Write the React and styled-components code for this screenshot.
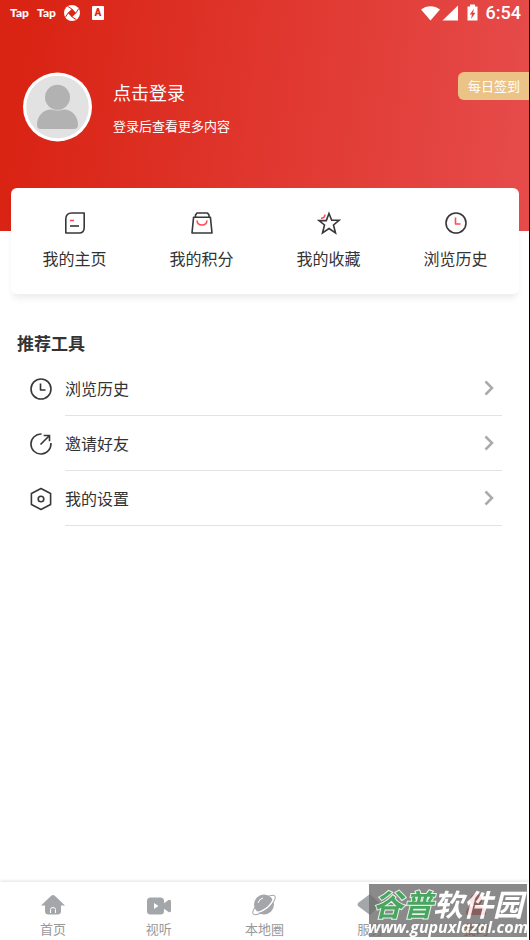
import React from 'react';
import styled, { createGlobalStyle } from 'styled-components';

const GlobalStyle = createGlobalStyle`
  * {
    box-sizing: border-box;
  }

  body {
    margin: 0;
    background: #fff;
    color: #333;
    font-family: 'Noto Sans CJK SC', sans-serif;
  }

  button {
    font-family: inherit;
    color: inherit;
    background: none;
    border: none;
    padding: 0;
    cursor: pointer;
  }

  a {
    color: inherit;
    text-decoration: none;
  }

  svg {
    display: block;
    flex: none;
  }
`;

const Page = styled.div`
  display: flex;
  flex-direction: column;
  min-height: 100vh;
  border-right: 1px solid #000;
`;

// Header
const Header = styled.header`
  padding-bottom: 89px;
  color: #fff;
  background: linear-gradient(98deg, #d92313 4%, #e64b4a 97%);
`;

const StatusBar = styled.div`
  display: flex;
  align-items: center;
  justify-content: space-between;
  height: 26px;
  padding: 0 8px 0 10px;
`;

const StatusGroup = styled.div`
  display: flex;
  align-items: center;
  gap: ${({ $gap }) => $gap}px;
`;

const TapMark = styled.span`
  font: 900 12px/16px Lato, sans-serif;
`;

const Clock = styled.time`
  font: 500 18px/26px Roboto, sans-serif;
`;

const Profile = styled.div`
  display: flex;
  align-items: flex-start;
  padding: 46px 0 0 23px;
`;

const ProfileText = styled.div`
  flex: 1;
  padding: 7px 0 0 21px;
`;

const LoginButton = styled.button`
  display: block;
  font-size: 18px;
  line-height: 26px;
`;

const Hint = styled.p`
  margin: 11px 0 0;
  font-size: 13px;
  line-height: 20px;
`;

const SignInButton = styled.button`
  height: 28px;
  padding: 0 9px 0 10px;
  border-radius: 6px 0 0 6px;
  background: #ecc386;
  color: #fff;
  font-size: 13px;
  line-height: 28px;
`;

// Shortcut card
const Card = styled.nav`
  position: relative;
  display: flex;
  margin: -43px 10px 0 11px;
  padding: 23px 0 22px;
  border-radius: 6px;
  background: #fff;
  box-shadow: 0 6px 7px -2px rgba(0, 0, 0, 0.08);
`;

const Shortcut = styled.a`
  flex: 1;
  display: flex;
  flex-direction: column;
  align-items: center;
  gap: 10px;
  font-size: 16px;
  line-height: 27px;
`;

// Tool list
const Tools = styled.main`
  flex: 1;
  padding: 36px 27px 0 17px;
`;

const Title = styled.h2`
  margin: 0 0 5px;
  font-size: 17px;
  line-height: 26px;
`;

const ToolList = styled.ul`
  margin: 0;
  padding: 0 0 0 12px;
  list-style: none;
`;

const ToolLink = styled.a`
  display: flex;
  align-items: center;
  gap: 12px;
`;

const ToolBody = styled.span`
  flex: 1;
  display: flex;
  align-items: center;
  justify-content: space-between;
  height: 55px;
  padding-right: 8px;
  border-bottom: 1px solid #e3e3e3;
  font-size: 16px;
`;

// Bottom tabs
const TabBar = styled.nav`
  display: flex;
  height: 58px;
  padding-top: 11px;
  background: #fff;
  box-shadow: 0 -1px 3px rgba(0, 0, 0, 0.12);
`;

const Tab = styled.a`
  flex: 1;
  display: flex;
  flex-direction: column;
  align-items: center;
  gap: 2px;
  color: ${({ $active }) => ($active ? '#e0302a' : '#999')};
  font-size: 13px;
  line-height: 20px;
`;

const Watermark = styled.div`
  position: fixed;
  right: 3px;
  bottom: 3px;
  width: 158px;
  height: 53px;
  background: rgba(107, 107, 107, 0.9);
  opacity: 0.88;
  color: #fff;
  white-space: nowrap;
  display: flex;
  flex-direction: column;
  align-items: center;
`;

const WatermarkName = styled.div`
  font-size: 30px;
  font-weight: 700;
  font-style: italic;
  line-height: 34px;
  height: 33px;
  padding-top: 2px;
`;

const Green = styled.span`
  color: #2f9a4b;
  -webkit-text-stroke: 2px #e6f0e6;
  paint-order: stroke fill;
`;

const WatermarkUrl = styled.div`
  font: italic 700 16px/20px 'Open Sans', sans-serif;
`;

const LineIcon = ({ children }) => (
  <svg width="24" height="24" viewBox="0 0 24 24" fill="none" stroke="#383838" strokeWidth="1.6" strokeLinejoin="round" aria-hidden="true">
    {children}
  </svg>
);

const HomePageIcon = () => (
  <LineIcon>
    <path d="M9 2H21.2V16.5C21.2 20 19 22 16 22H2.8V8C2.8 4 5 2 9 2Z" />
    <path d="M7 15H16" />
    <path d="M7 9.5H11" stroke="#ff4d55" />
  </LineIcon>
);

const PointsIcon = () => (
  <LineIcon>
    <path d="M3.6 6.2H20.4L22 22H2Z" />
    <path d="M5.5 6V4L7 2H17.5L19 4V6" />
    <path d="M7 9.5C7.5 15.5 16.5 15.5 17 9.5" stroke="#ff4d55" />
  </LineIcon>
);

const StarIcon = () => (
  <LineIcon>
    <path d="M12 2.5L14.7 9.3H22L16.5 14L18.5 22L12 17.5L5.5 22L7.5 14L2 9.6H9.3Z" strokeLinejoin="miter" />
    <path d="M4 7.3C6.5 7.3 7.8 6.5 8 3.5" stroke="#ff4d55" />
  </LineIcon>
);

const ClockIcon = ({ hand = 'currentColor' }) => (
  <LineIcon>
    <circle cx="12" cy="12" r="10" />
    <path d="M11.5 6.5V13H16.5" stroke={hand} />
  </LineIcon>
);

const InviteIcon = () => (
  <LineIcon>
    <path d="M12.5 2A10 10 0 1 0 21.9 11" />
    <path d="M11.5 12.5L20 4M14.7 3.5H20.5V9.3" strokeLinejoin="miter" />
  </LineIcon>
);

const SettingsIcon = () => (
  <LineIcon>
    <path d="M12 1.5L21.6 6.5V17.5L12 22.5L2.4 17.5V6.5Z" />
    <circle cx="12" cy="12" r="2.8" />
  </LineIcon>
);

const Chevron = () => (
  <svg width="10" height="16" viewBox="0 0 10 16" fill="none" stroke="#aaa" strokeWidth="2.5" aria-hidden="true">
    <path d="M1.5 1.5L8 8L1.5 14.5" />
  </svg>
);

const Avatar = () => (
  <svg width="69" height="70" viewBox="0 0 69 70" role="img" aria-label="头像">
    <circle cx="34.5" cy="35" r="34.5" fill="#fff" />
    <circle cx="34.5" cy="35" r="31.3" fill="#e2e2e2" />
    <circle cx="34.5" cy="25.3" r="12.5" fill="#b2b2b2" />
    <path d="M14 53C14 44 20 37.5 28 37.5Q34.5 39.5 41 37.5C49 37.5 55 44 55 53Q55 57 51 57H18Q14 57 14 53Z" fill="#b2b2b2" />
  </svg>
);

const ApertureIcon = () => (
  <svg width="16" height="16" viewBox="0 0 16 16" aria-hidden="true">
    <circle cx="8" cy="8" r="8" fill="#fff" />
    <path d="M8 3.8L12.2 8L8 12.2L3.8 8Z" fill="#da2718" />
    <path d="M8.5 4.5L4 1.5M11.5 8.5L14.5 4M7.5 11.5L12 14.5M4.5 7.5L1.5 12" stroke="#da2718" />
  </svg>
);

const LetterIcon = styled.span`
  width: 12px;
  height: 14px;
  margin-left: 4px;
  border-radius: 1px;
  background: #fff;
  color: #da2718;
  font: 900 10px/13px Roboto, sans-serif;
  text-align: center;
`;

const SignalIcons = () => (
  <svg width="58" height="18" viewBox="0 0 58 18" fill="#fff" aria-hidden="true">
    <path d="M0 5.5C5.5 1 13.5 1 19 5.5L9.5 16.5Z" />
    <path d="M37 1.5V16.5H21.5Z" />
    <path d="M46.5 2.5H49V0.5H54V2.5H56.5V16.5H46.5Z" />
    <path d="M53 4.5L48.8 10.5H51L50 15L54.5 8.7H52Z" fill="#e34340" />
  </svg>
);

const TabIcon = ({ children }) => (
  <svg width="26" height="24" viewBox="0 0 26 24" fill="currentColor" aria-hidden="true">
    {children}
  </svg>
);

const tabs = [
  {
    label: '首页',
    icon: (
      <>
        <path d="M11.5 2.5Q13 1.5 14.5 2.5L25 12.5H21V18Q21 21.5 17.5 21.5H8.5Q5 21.5 5 18V12.5H1Z" fill="#a3a7a9" />
        <path d="M10.5 20V16.5Q10.5 14.5 13 14.5T15.5 16.5V20" fill="none" stroke="#fff" />
      </>
    ),
  },
  {
    label: '视听',
    icon: (
      <>
        <rect x="1" y="4.5" width="17" height="17" rx="3.5" fill="#a3a7a9" />
        <path d="M17 11L22.5 7Q25 6 25 8.5V17.5Q25 20 22.5 19L17 15Z" fill="#a3a7a9" />
        <path d="M8 10V16L12.5 13Z" fill="#fff" />
      </>
    ),
  },
  {
    label: '本地圈',
    icon: (
      <>
        <ellipse cx="13" cy="12" rx="14" ry="5" transform="rotate(-40 13 12)" fill="none" stroke="#a3a7a9" />
        <circle cx="13" cy="11.5" r="10" fill="#a3a7a9" />
        <path d="M4.5 19.5C12 19 20 13 22.5 6" fill="none" stroke="#fff" strokeWidth="1.4" />
        <path d="M7 10Q8 6 12 5" fill="none" stroke="#fff" />
      </>
    ),
  },
  {
    label: '服务',
    icon: <path d="M13 1L24 11.5L13 22L1 13Q0 11.5 1 10Z" fill="#a3a7a9" />,
  },
  {
    label: '我的',
    active: true,
    icon: (
      <>
        <circle cx="13" cy="7" r="6" />
        <path d="M3 21Q3 14 9 13H17Q23 14 23 21Q23 22 21 22H5Q3 22 3 21Z" />
      </>
    ),
  },
];

const shortcuts = [
  { label: '我的主页', icon: <HomePageIcon /> },
  { label: '我的积分', icon: <PointsIcon /> },
  { label: '我的收藏', icon: <StarIcon /> },
  { label: '浏览历史', icon: <ClockIcon hand="#ff4d55" /> },
];

const tools = [
  { label: '浏览历史', icon: <ClockIcon /> },
  { label: '邀请好友', icon: <InviteIcon /> },
  { label: '我的设置', icon: <SettingsIcon /> },
];

const App = () => (
  <Page>
    <GlobalStyle />
    <Header>
      <StatusBar>
        <StatusGroup $gap={8}>
          <TapMark>Tap</TapMark>
          <TapMark>Tap</TapMark>
          <ApertureIcon />
          <LetterIcon>A</LetterIcon>
        </StatusGroup>
        <StatusGroup $gap={7}>
          <SignalIcons />
          <Clock>6:54</Clock>
        </StatusGroup>
      </StatusBar>
      <Profile>
        <Avatar />
        <ProfileText>
          <LoginButton type="button">点击登录</LoginButton>
          <Hint>登录后查看更多内容</Hint>
        </ProfileText>
        <SignInButton type="button">每日签到</SignInButton>
      </Profile>
    </Header>
    <Card>
      {shortcuts.map(({ label, icon }) => (
        <Shortcut key={label} href="#">
          {icon}
          {label}
        </Shortcut>
      ))}
    </Card>
    <Tools>
      <Title>推荐工具</Title>
      <ToolList>
        {tools.map(({ label, icon }) => (
          <li key={label}>
            <ToolLink href="#">
              {icon}
              <ToolBody>
                {label}
                <Chevron />
              </ToolBody>
            </ToolLink>
          </li>
        ))}
      </ToolList>
    </Tools>
    <TabBar>
      {tabs.map(({ label, icon, active }) => (
        <Tab key={label} href="#" $active={active}>
          <TabIcon>{icon}</TabIcon>
          {label}
        </Tab>
      ))}
    </TabBar>
    <Watermark>
      <WatermarkName>
        <Green>谷普</Green>软件园
      </WatermarkName>
      <WatermarkUrl>www.gupuxlazal.com</WatermarkUrl>
    </Watermark>
  </Page>
);

export default App;
